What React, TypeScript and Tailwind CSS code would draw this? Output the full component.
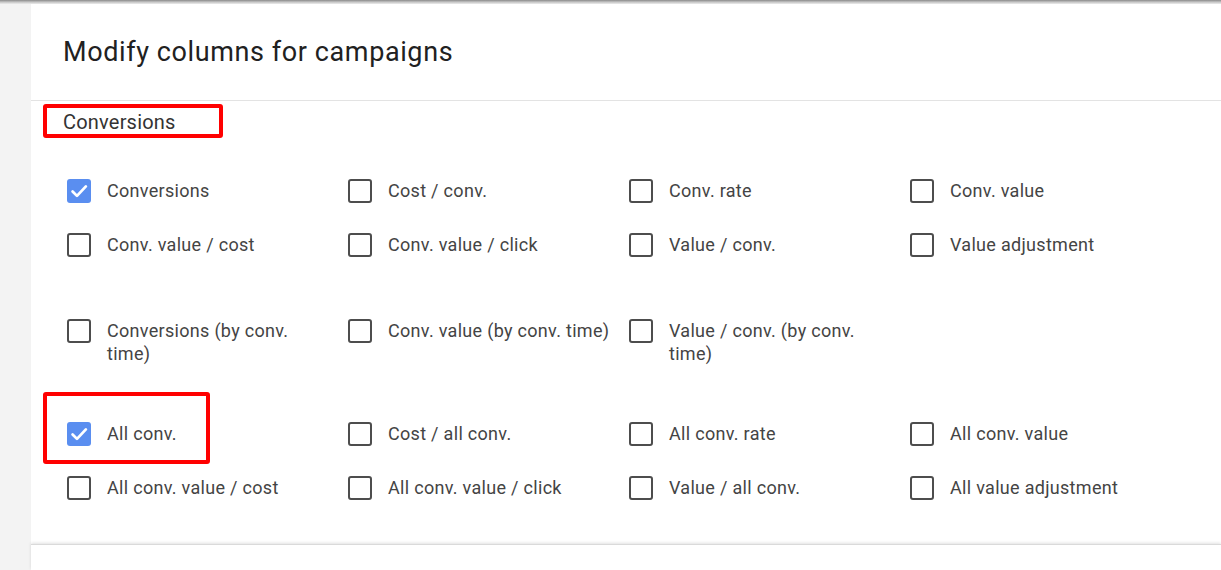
import React from 'react';

type Item = { label: string; checked?: boolean; marked?: boolean };

const rows: { items: (Item | null)[]; gap: string }[] = [
  {
    gap: 'mt-[44px]',
    items: [
      { label: 'Conversions', checked: true },
      { label: 'Cost / conv.' },
      { label: 'Conv. rate' },
      { label: 'Conv. value' },
    ],
  },
  {
    gap: 'mt-[30px]',
    items: [
      { label: 'Conv. value / cost' },
      { label: 'Conv. value / click' },
      { label: 'Value / conv.' },
      { label: 'Value adjustment' },
    ],
  },
  {
    gap: 'mt-[62px]',
    items: [
      { label: 'Conversions (by conv. time)' },
      { label: 'Conv. value (by conv. time)' },
      { label: 'Value / conv. (by conv. time)' },
      null,
    ],
  },
  {
    gap: 'mt-[57px]',
    items: [
      { label: 'All conv.', checked: true, marked: true },
      { label: 'Cost / all conv.' },
      { label: 'All conv. rate' },
      { label: 'All conv. value' },
    ],
  },
  {
    gap: 'mt-[30px]',
    items: [
      { label: 'All conv. value / cost' },
      { label: 'All conv. value / click' },
      { label: 'Value / all conv.' },
      { label: 'All value adjustment' },
    ],
  },
];

const Checkbox = ({ checked }: { checked?: boolean }) =>
  checked ? (
    <span className="flex h-[24px] w-[24px] shrink-0 items-center justify-center rounded-[3px] bg-[#5a8ef0]">
      <svg viewBox="0 0 24 24" className="h-[22px] w-[22px]" fill="none" stroke="white" strokeWidth={3} strokeLinecap="round" strokeLinejoin="round">
        <path d="M5 12.5l4.8 4.8L19.5 7" />
      </svg>
    </span>
  ) : (
    <span className="h-[24px] w-[24px] shrink-0 rounded-[3px] border-[2.5px] border-[#4d4d4d] bg-white" />
  );

const ColumnOption = ({ item }: { item: Item }) => (
  <label className="relative flex items-start gap-[16px]">
    <Checkbox checked={item.checked} />
    <span className="max-w-[226px] text-[18px] leading-[23px] tracking-[0.3px] text-[#444]">{item.label}</span>
    {item.marked && (
      <span className="absolute left-[-24px] top-[-30px] h-[72px] w-[167px] rounded-[3px] border-[4px] border-[#ff0000]" />
    )}
  </label>
);

const App = () => {
  return (
    <div className="flex h-[570px] w-full flex-col overflow-hidden bg-[#f3f3f3] font-['Roboto',sans-serif]">
      {/* shadow of the bar above */}
      <div className="h-[4px] w-full shrink-0 bg-gradient-to-b from-[#8a8a8a] via-[#c4c4c4] to-[#ececec]" />

      <div className="flex flex-1 min-h-0">
        <div className="w-[31px] shrink-0" />

        <div className="flex flex-1 flex-col bg-white">
          {/* Header */}
          <div className="flex h-[97px] shrink-0 items-center border-b border-[#e3e3e3] pl-[32px]">
            <h1 className="text-[27px] font-normal tracking-[0.6px] text-[#212121]">Modify columns for campaigns</h1>
          </div>

          {/* Section */}
          <div className="relative pl-[32px] pt-[8px]">
            <div className="text-[20px] leading-[26px] tracking-[0.2px] text-[#333]">Conversions</div>
            <div className="absolute left-[12px] top-[3px] h-[34px] w-[180px] rounded-[3px] border-[4px] border-[#ff0000]" />
          </div>

          <div className="pl-[36px]">
            {rows.map((row, i) => (
              <div key={i} className={`grid grid-cols-[281px_281px_281px_1fr] ${row.gap}`}>
                {row.items.map((item, j) => (item ? <ColumnOption key={j} item={item} /> : <div key={j} />))}
              </div>
            ))}
          </div>

          <div className="flex-1" />

          {/* Next panel */}
          <div className="h-[26px] shrink-0 border-t border-[#dadada] shadow-[0_-1px_3px_rgba(0,0,0,0.12)]" />
        </div>
      </div>
    </div>
  );
};

export default App;
